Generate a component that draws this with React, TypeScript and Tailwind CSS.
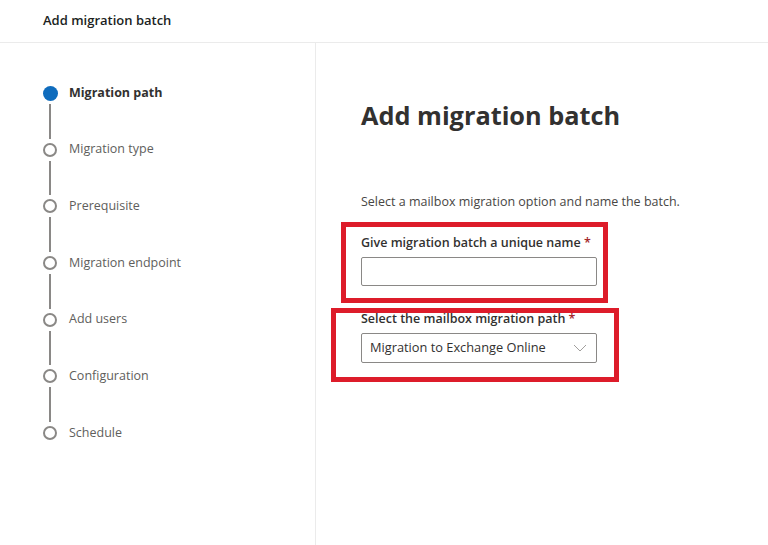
import React from "react";

const steps = [
  "Migration path",
  "Migration type",
  "Prerequisite",
  "Migration endpoint",
  "Add users",
  "Configuration",
  "Schedule",
];

export default function App() {
  return (
    <div className="w-[768px] h-[545px] bg-white flex flex-col overflow-hidden font-['Open_Sans',sans-serif] text-[#323130]">
      <header className="h-[43px] shrink-0 border-b border-[#ebebeb] pl-[43px] flex items-center">
        <span className="text-[13px] font-semibold text-[#201f1e]">Add migration batch</span>
      </header>
      <div className="flex flex-1">
        <aside className="w-[316px] shrink-0 border-r border-[#ebebeb] pt-[42px] pl-[42px]">
          {steps.map((s, i) => (
            <div key={s}>
              <div className="flex items-center h-[16px]">
                <div className="w-[16px] h-[16px] flex items-center justify-center">
                  {i === 0 ? (
                    <div className="w-[15px] h-[15px] rounded-full bg-[#0f6cbd]" />
                  ) : (
                    <div className="w-[14px] h-[14px] rounded-full border-2 border-[#8a8886]" />
                  )}
                </div>
                <span
                  className={
                    "ml-[11px] text-[12.5px] " +
                    (i === 0 ? "font-bold text-[#323130]" : "text-[#605e5c]")
                  }
                >
                  {s}
                </span>
              </div>
              {i < steps.length - 1 && (
                <div className="w-[16px] flex justify-center py-[3px]">
                  <div className="w-[2px] h-[34.67px] bg-[#8a8886]" />
                </div>
              )}
            </div>
          ))}
        </aside>
        <main className="relative flex-1 pl-[45px] pt-[56px]">
          <h1 className="text-[25.3px] leading-[32px] font-bold text-[#323130]">Add migration batch</h1>
          <p className="mt-[62px] text-[12.5px] leading-[18px] text-[#484644]">
            Select a mailbox migration option and name the batch.
          </p>
          <div className="mt-[23px] text-[12.5px] leading-[18px] font-semibold text-[#323130]">
            Give migration batch a unique name <span className="text-[#a4262c]">*</span>
          </div>
          <div className="mt-[5px] w-[236px] h-[29px] border border-[#8a8886] rounded-[2px]" />
          <div className="mt-[24px] text-[12.5px] leading-[18px] font-semibold text-[#323130]">
            Select the mailbox migration path <span className="text-[#a4262c]">*</span>
          </div>
          <div className="mt-[5px] w-[236px] h-[30px] border border-[#8a8886] rounded-[2px] flex items-center pl-[8px] pr-[8px]">
            <span className="flex-1 text-[12.8px] text-[#323130]">Migration to Exchange Online</span>
            <svg width="14" height="8" viewBox="0 0 14 8" className="mr-[1px]">
              <polyline points="1,1 7,7 13,1" fill="none" stroke="#a19f9d" strokeWidth="1" />
            </svg>
          </div>
          <div className="absolute left-[25px] top-[179px] w-[267px] h-[81px] border-[5px] border-[#dd1c2a]" />
          <div className="absolute left-[15px] top-[265px] w-[288px] h-[74px] border-[5px] border-[#dd1c2a]" />
        </main>
      </div>
    </div>
  );
}
